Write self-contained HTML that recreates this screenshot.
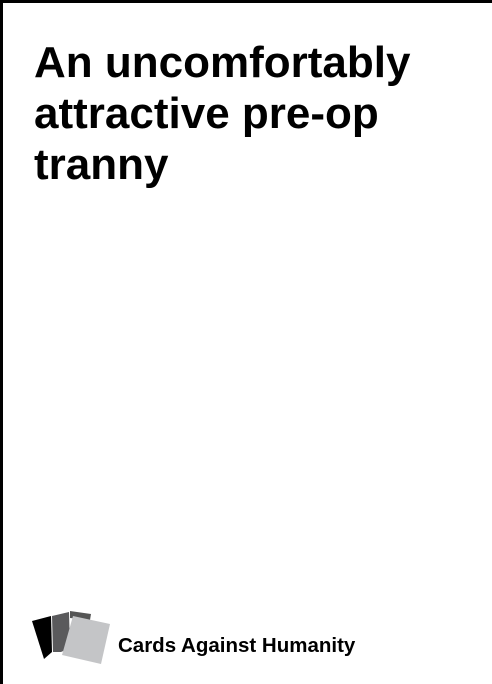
<!DOCTYPE html>
<html><head><meta charset="utf-8"><style>
html,body{margin:0;padding:0;background:#fff;}
.card{position:relative;width:492px;height:684px;box-sizing:border-box;border-top:3px solid #000;border-left:3px solid #000;background:#fff;overflow:hidden;}
.t{position:absolute;left:31px;top:34px;font-family:"Liberation Sans",sans-serif;font-weight:bold;font-size:44px;line-height:51px;color:#000;margin:0;}
.l{position:absolute;left:115px;top:631px;font-family:"Liberation Sans",sans-serif;font-weight:bold;font-size:20.5px;color:#000;}
svg{position:absolute;left:0;top:0;}
</style></head><body><div class="card">
<svg width="492" height="684" style="left:-3px;top:-3px">
<polygon points="32,621 51,616 52,652 44,659" fill="#000"/>
<polygon points="70,611 91,614 90,620 70,618" fill="#555"/>
<polygon points="52,616 69,612 70,648 61,652 53,652" fill="#5a5a5c"/>
<polygon points="73,616 110,624 101,664 62,655" fill="#c4c5c7"/>
</svg>
<div class="t">An uncomfortably<br>attractive pre-op<br>tranny</div>
<div class="l">Cards Against Humanity</div>
</div></body></html>
